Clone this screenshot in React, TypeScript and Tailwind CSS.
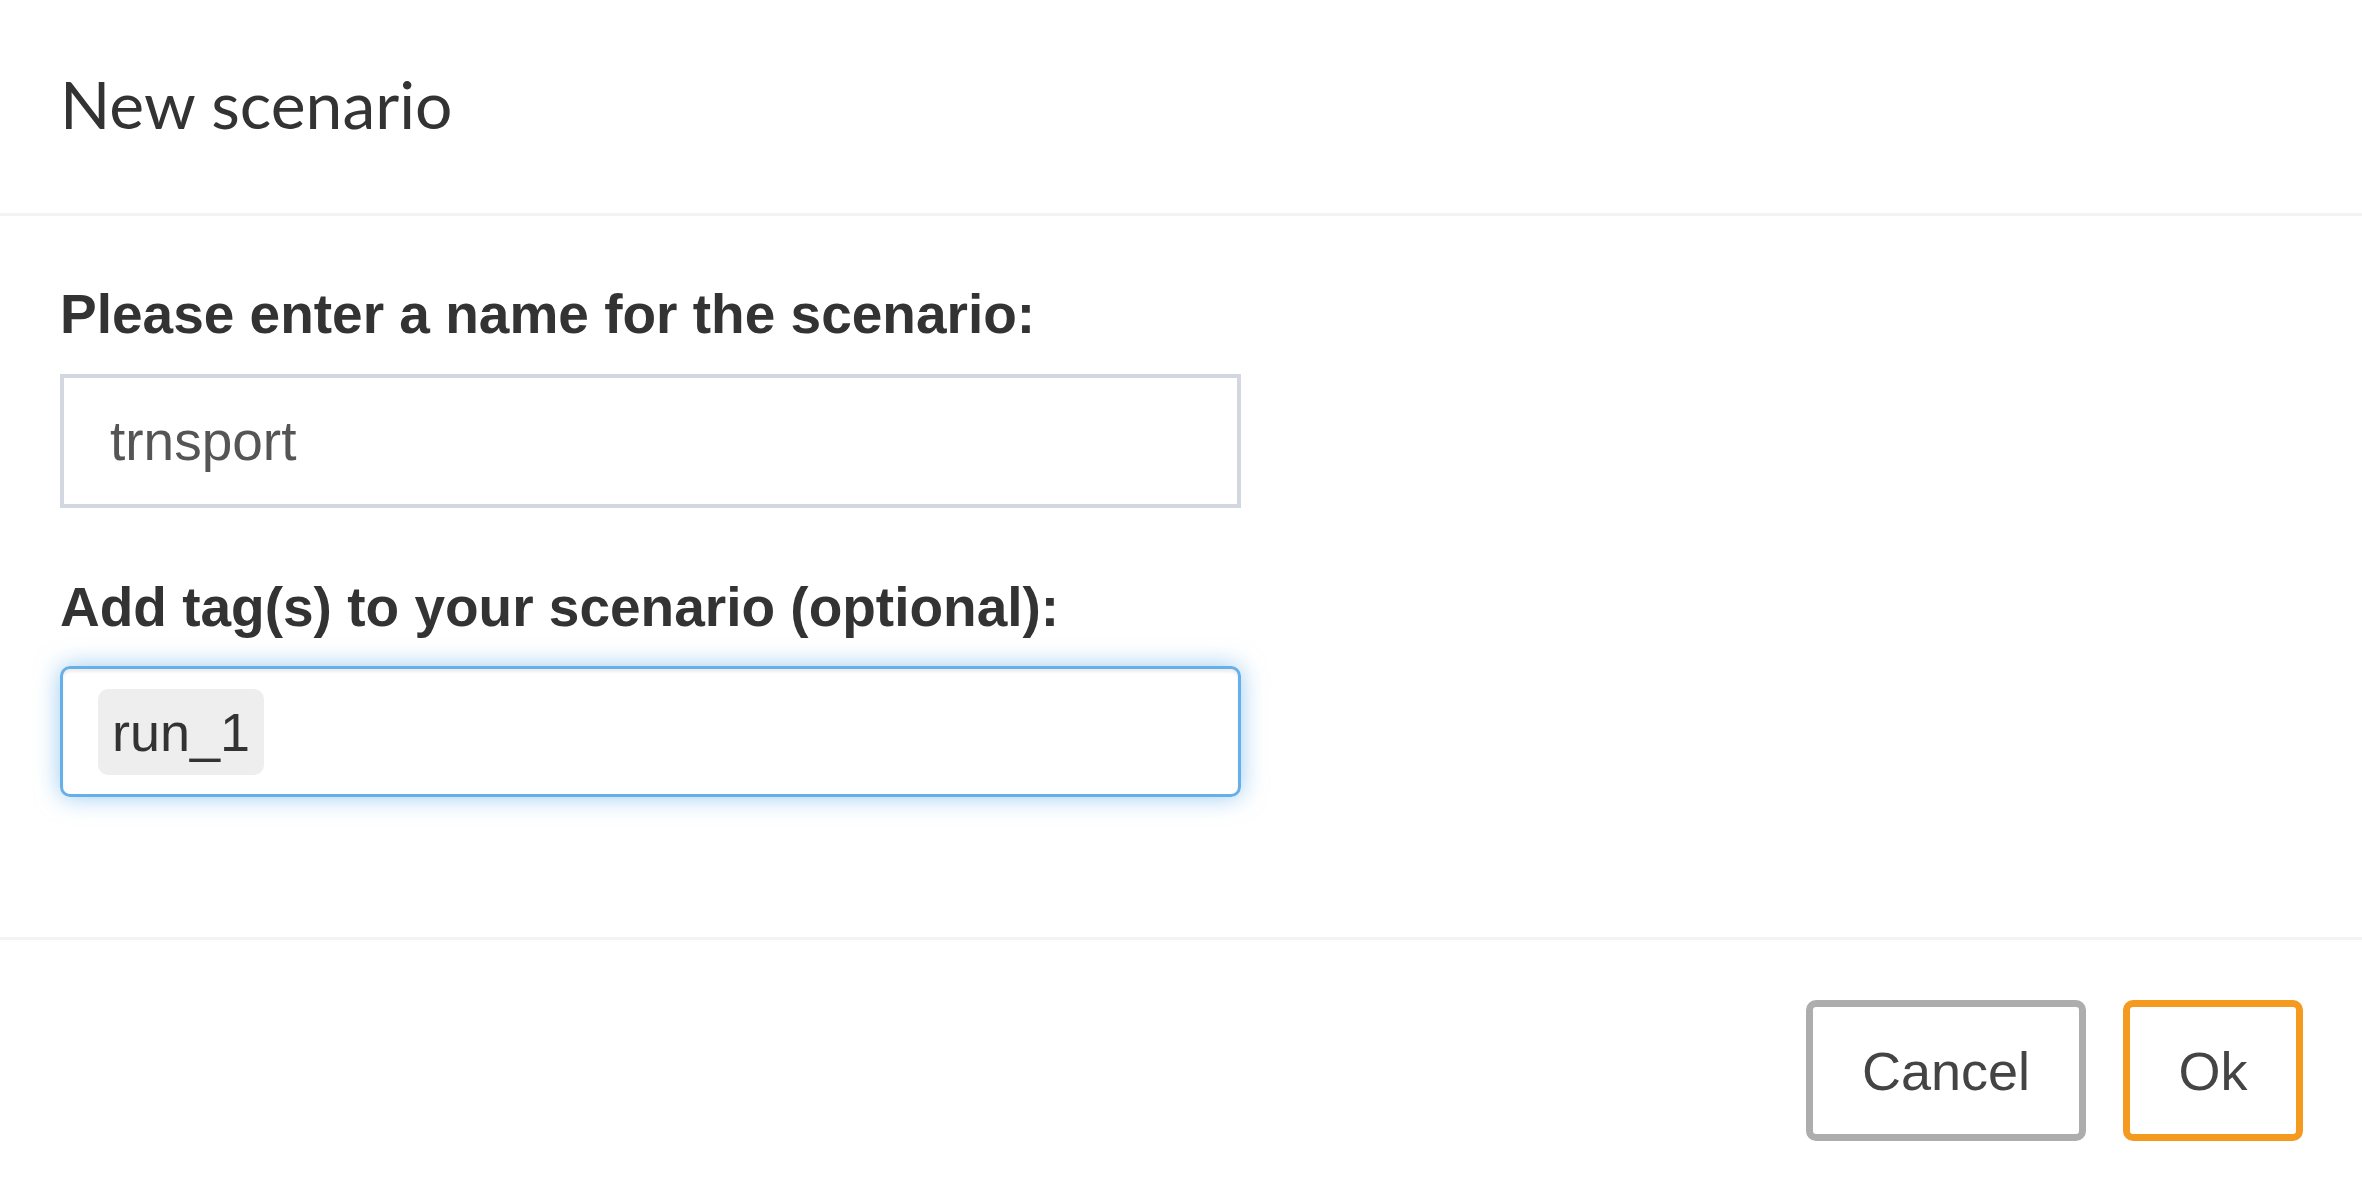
import React from "react";

// Modal-like form: title, two fields, footer buttons
export default function App() {
    return (
        <div className="w-[2362px] h-[1200px] bg-white flex flex-col font-['Liberation_Sans',Arial,sans-serif] text-[#333]">
            {/* Header */}
            <div className="h-[216px] shrink-0 border-b-[3px] border-[#f3f3f3] px-[60px] pt-[64px]">
                <h4 className="font-['Lato',sans-serif] font-normal text-[66px] leading-[80px] text-[#333]">
                    New scenario
                </h4>
            </div>

            {/* Body */}
            <div className="h-[724px] shrink-0 border-b-[3px] border-[#f3f3f3] px-[60px] pt-[67px]">
                <label className="block text-[55px] leading-[62px] font-bold text-[#333]">
                    Please enter a name for the scenario:
                </label>
                <input
                    readOnly
                    value="trnsport"
                    className="mt-[29px] block w-[1181px] h-[134px] border-[4px] border-[#d3d7df] pl-[46px] text-[55px] leading-[62px] text-[#555] outline-none"
                />

                <label className="block mt-[68px] text-[55px] leading-[62px] font-bold text-[#333]">
                    Add tag(s) to your scenario (optional):
                </label>
                <div className="mt-[28px] w-[1181px] h-[131px] border-[3px] border-[#66afe9] rounded-[10px] flex items-center pl-[35px] shadow-[inset_0_3px_3px_rgba(0,0,0,0.075),0_0_24px_rgba(102,175,233,0.65)]">
                    <span className="h-[86px] px-[14px] rounded-[10px] bg-[#eeeeee] flex items-center text-[54px] leading-[62px] text-[#333]">
                        run_1
                    </span>
                    <input className="flex-1 h-full outline-none bg-transparent text-[54px]" />
                </div>
            </div>

            {/* Footer */}
            <div className="flex-1 flex justify-end items-start gap-[37px] pt-[60px] pr-[59px]">
                <button className="w-[280px] h-[141px] border-[7px] border-[#adadad] rounded-[10px] bg-white text-[54px] leading-[62px] text-[#444]">
                    Cancel
                </button>
                <button className="w-[180px] h-[141px] border-[7px] border-[#f39a1f] rounded-[10px] bg-white text-[54px] leading-[62px] text-[#444]">
                    Ok
                </button>
            </div>
        </div>
    );
}
